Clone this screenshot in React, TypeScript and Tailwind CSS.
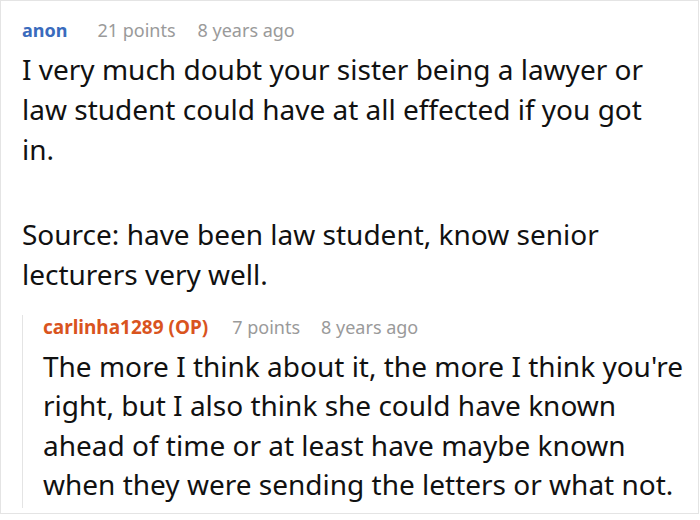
export default function App() {
  return (
    <div className="w-[700px] h-[520px] bg-white" style={{ fontFamily: '"Noto Sans", "Open Sans", sans-serif' }}>
      <div className="w-[699px] h-[514px] border border-[#e4e4e4] pl-[21px] pt-[17px] overflow-hidden">
        {/* top-level comment */}
        <div className="flex items-center h-6 text-[18px] leading-6">
          <span className="font-bold text-[#3a6bbd]">anon</span>
          <span className="ml-[30px] text-[#9a9a9a]">21 points</span>
          <span className="ml-[22px] text-[#9a9a9a]">8 years ago</span>
        </div>
        <div className="mt-[7px] text-[28px] leading-[40px] text-[#111] whitespace-nowrap">
          <p>
            I very much doubt your sister being a lawyer or
            <br />
            law student could have at all effected if you got
            <br />
            in.
          </p>
          <p className="mt-[45px]">
            Source: have been law student, know senior
            <br />
            lecturers very well.
          </p>
        </div>

        {/* reply */}
        <div className="mt-[25px] border-l border-[#e4e4e4] pl-[20px] pb-[4px]">
          <div className="flex items-center h-6 text-[18px] leading-6 -mt-[4px]">
            <span className="font-bold text-[#d9541e] text-[19px]">carlinha1289 (OP)</span>
            <span className="ml-[24px] text-[#9a9a9a]">7 points</span>
            <span className="ml-[21px] text-[#9a9a9a]">8 years ago</span>
          </div>
          <p className="mt-[8px] text-[28px] leading-[39.3px] text-[#111] whitespace-nowrap">
            The more I think about it, the more I think you're
            <br />
            right, but I also think she could have known
            <br />
            ahead of time or at least have maybe known
            <br />
            when they were sending the letters or what not.
          </p>
        </div>
      </div>
    </div>
  );
}
